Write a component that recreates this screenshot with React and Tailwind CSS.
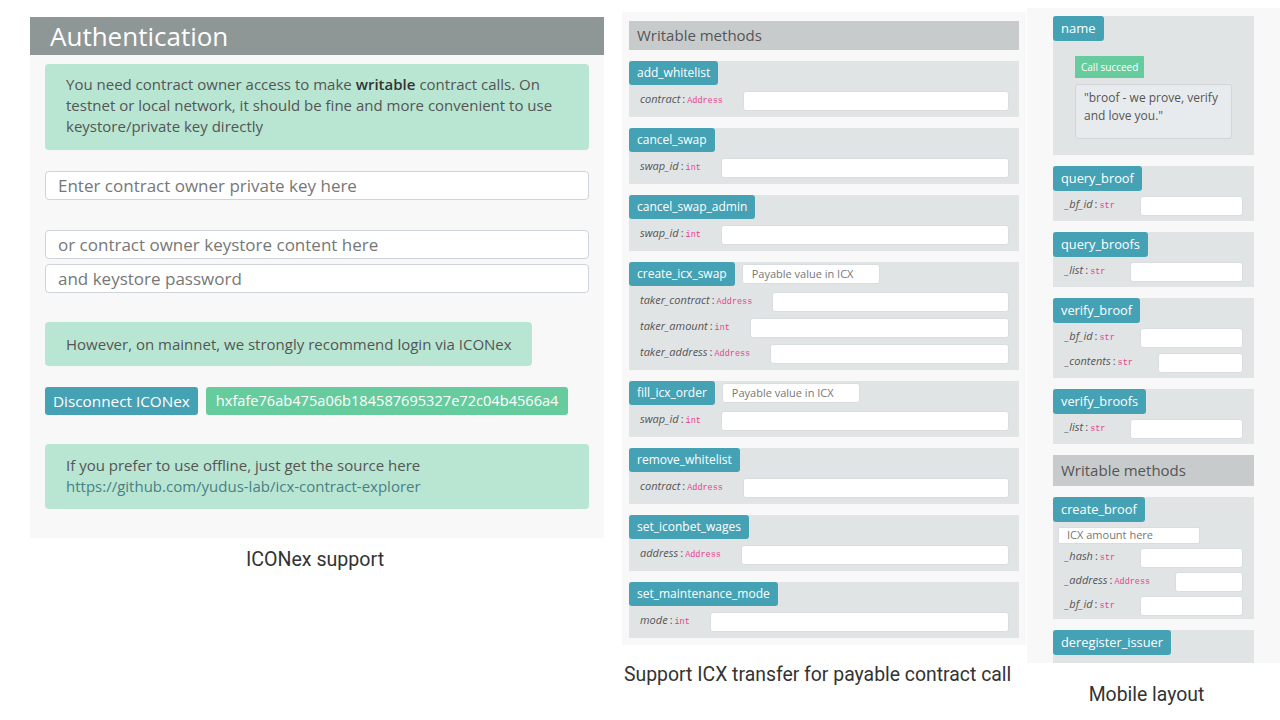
import React from "react";

const F = { fontFamily: '"Open Sans", "DejaVu Sans", sans-serif' };

function Label({ name, type }) {
  return (
    <div className="flex items-baseline whitespace-nowrap">
      <span className="italic text-[11px] text-[#555]">{name}</span>
      <span className="text-[11px] text-[#555] mx-[2px]">:</span>
      <span className="text-[8.5px] text-[#e83e8c]" style={{ fontFamily: '"Liberation Mono", monospace' }}>{type}</span>
    </div>
  );
}

function Method({ name, payable, params, mobile }) {
  return (
    <div className={`bg-[#e1e4e5] flex flex-col ${mobile ? "pb-[5px] gap-[5px]" : "pb-[6px] gap-[6px]"}`}>
      <div className="flex items-center">
        <div className={`bg-[#45a2b5] text-white rounded-[3px] px-[8px] flex items-center ${mobile ? "h-[25px] text-[12.8px]" : "h-[24px] text-[12px]"}`}>{name}</div>
        {payable && (
          <div className="ml-[7px] w-[138px] h-[20px] bg-white rounded-[3px] border border-[#dadde0] flex items-center px-[9px] text-[11px] text-[#777]">Payable value in ICX</div>
        )}
      </div>
      {params.map((p) => (
        <div key={p[0]} className={`flex items-start ${mobile ? "pl-[12px] pr-[11px]" : "pl-[11px] pr-[10px]"}`}>
          <Label name={p[0]} type={p[1]} />
          <div className={`flex-1 h-[20px] bg-white rounded-[3px] border border-[#dadde0] ${mobile ? "ml-[25px]" : "ml-[20px]"}`} />
        </div>
      ))}
    </div>
  );
}

export default function App() {
  return (
    <div className="w-[1280px] h-[720px] bg-white flex items-start overflow-hidden" style={F}>
      {/* Panel 1 */}
      <div className="ml-[30px] mt-[17px] w-[574px] flex flex-col">
        <div className="bg-[#f8f8f8] h-[521px] flex flex-col">
          <div className="h-[38px] bg-[#8e9696] text-white text-[26px] pl-[20px] flex items-center">Authentication</div>
          <div className="px-[15px]">
            <div className="mt-[9px] bg-[#b8e6d2] rounded-[4px] h-[86px] pl-[21px] pr-[10px] pt-[10px] text-[15px] leading-[21px] text-[#555] whitespace-nowrap">
              <div className="flex">
                <span>You need contract owner access to make</span>
                <b className="ml-[4px] mr-[4px] font-semibold text-[#333]">writable</b>
                <span>contract calls. On</span>
              </div>
              <div>testnet or local network, it should be fine and more convenient to use</div>
              <div>keystore/private key directly</div>
            </div>
            <div className="mt-[21px] h-[29px] bg-white border border-[#ced4da] rounded-[4px] flex items-center pl-[12px] text-[17px] text-[#777]">Enter contract owner private key here</div>
            <div className="mt-[30px] h-[29px] bg-white border border-[#ced4da] rounded-[4px] flex items-center pl-[12px] text-[17px] text-[#777]">or contract owner keystore content here</div>
            <div className="mt-[5px] h-[29px] bg-white border border-[#ced4da] rounded-[4px] flex items-center pl-[12px] text-[17px] text-[#777]">and keystore password</div>
            <div className="mt-[29px] w-[487px] h-[44px] bg-[#b8e6d2] rounded-[4px] flex items-center pl-[21px] text-[15px] text-[#555]">However, on mainnet, we strongly recommend login via ICONex</div>
            <div className="mt-[21px] flex gap-[8px]">
              <div className="h-[28px] px-[8px] bg-[#45a2b5] rounded-[3px] text-white text-[15.3px] flex items-center">Disconnect ICONex</div>
              <div className="h-[28px] px-[10px] bg-[#66cc9e] rounded-[3px] text-white text-[14.6px] flex items-center">hxfafe76ab475a06b184587695327e72c04b4566a4</div>
            </div>
            <div className="mt-[29px] h-[65px] bg-[#b8e6d2] rounded-[4px] pl-[21px] pt-[11px] text-[15px] leading-[21px] text-[#555]">
              <div>If you prefer to use offline, just get the source here</div>
              <div className="text-[#4a7f86]">https://github.com/yudus-lab/icx-contract-explorer</div>
            </div>
          </div>
        </div>
        <div className="mt-[7px] text-center text-[19.6px] text-[#333] pr-[4px]" style={{ fontFamily: "Roboto, sans-serif" }}>ICONex support</div>
      </div>

      {/* Panel 2 */}
      <div className="ml-[18px] mt-[12px] w-[404px] flex flex-col">
        <div className="bg-[#f8f8f8] h-[633px] px-[7px] pt-[9px] flex flex-col gap-[11px]">
          <div className="h-[29px] bg-[#c8cbcb] text-[15px] text-[#555] pl-[8px] flex items-center">Writable methods</div>
          <Method name="add_whitelist" params={[["contract", "Address"]]} />
          <Method name="cancel_swap" params={[["swap_id", "int"]]} />
          <Method name="cancel_swap_admin" params={[["swap_id", "int"]]} />
          <Method name="create_icx_swap" payable params={[["taker_contract", "Address"], ["taker_amount", "int"], ["taker_address", "Address"]]} />
          <Method name="fill_icx_order" payable params={[["swap_id", "int"]]} />
          <Method name="remove_whitelist" params={[["contract", "Address"]]} />
          <Method name="set_iconbet_wages" params={[["address", "Address"]]} />
          <Method name="set_maintenance_mode" params={[["mode", "int"]]} />
        </div>
        <div className="mt-[15px] text-[19.4px] text-[#333] pl-[2px] whitespace-nowrap" style={{ fontFamily: "Roboto, sans-serif" }}>Support ICX transfer for payable contract call</div>
      </div>

      {/* Panel 3 */}
      <div className="ml-[1px] mt-[8px] w-[253px] flex flex-col">
        <div className="bg-[#f8f8f8] h-[655px] pl-[26px] pr-[26px] pt-[8px] flex flex-col gap-[11px] overflow-hidden">
          <div className="bg-[#e1e4e5] h-[139px] flex flex-col shrink-0">
            <div className="self-start h-[25px] px-[8px] bg-[#45a2b5] rounded-[3px] text-white text-[13px] flex items-center">name</div>
            <div className="ml-[22px] mt-[15px] self-start h-[22px] px-[6px] bg-[#66cc9e] text-white text-[10px] flex items-center">Call succeed</div>
            <div className="ml-[22px] mt-[6px] w-[157px] h-[55px] bg-[#e8ebee] border border-[#d2d6da] rounded-[3px] px-[8px] pt-[4px] text-[12px] leading-[18px] text-[#555]">
              <div>"broof - we prove, verify</div>
              <div>and love you."</div>
            </div>
          </div>
          <Method mobile name="query_broof" params={[["_bf_id", "str"]]} />
          <Method mobile name="query_broofs" params={[["_list", "str"]]} />
          <Method mobile name="verify_broof" params={[["_bf_id", "str"], ["_contents", "str"]]} />
          <Method mobile name="verify_broofs" params={[["_list", "str"]]} />
          <div className="h-[31px] shrink-0 bg-[#c8cbcb] text-[15px] text-[#555] pl-[8px] flex items-center">Writable methods</div>
          <div className="bg-[#e1e4e5] flex flex-col pb-[3px] shrink-0">
            <div className="self-start h-[25px] px-[8px] bg-[#45a2b5] rounded-[3px] text-white text-[12.8px] flex items-center">create_broof</div>
            <div className="ml-[5px] mt-[5px] w-[142px] h-[17px] bg-white rounded-[2px] border border-[#dadde0] flex items-center px-[8px] text-[11px] text-[#777]">ICX amount here</div>
            {[["_hash", "str"], ["_address", "Address"], ["_bf_id", "str"]].map((p) => (
              <div key={p[0]} className="flex items-start pl-[12px] pr-[11px] mt-[4px]">
                <Label name={p[0]} type={p[1]} />
                <div className="flex-1 h-[20px] bg-white rounded-[3px] border border-[#dadde0] ml-[25px]" />
              </div>
            ))}
          </div>
          <div className="bg-[#e1e4e5] h-[40px] shrink-0 flex flex-col">
            <div className="self-start h-[25px] px-[8px] bg-[#45a2b5] rounded-[3px] text-white text-[12.8px] flex items-center">deregister_issuer</div>
          </div>
        </div>
        <div className="mt-[17px] text-center text-[19.4px] text-[#333] pr-[14px]" style={{ fontFamily: "Roboto, sans-serif" }}>Mobile layout</div>
      </div>
    </div>
  );
}
